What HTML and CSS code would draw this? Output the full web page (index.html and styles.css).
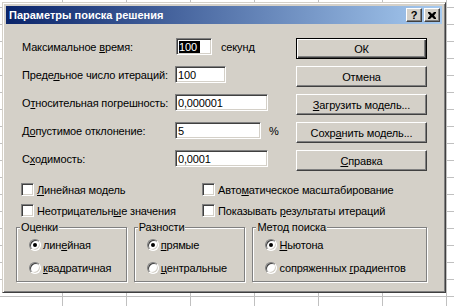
FILE: index.html
```html
<!DOCTYPE html>
<html lang="ru">
<head>
  <meta charset="UTF-8">
  <title>Параметры поиска решения</title>
  <link rel="stylesheet" href="styles.css">
</head>
<body>
  <div class="dialog">
    <div class="caption">
      <span class="caption-title">Параметры поиска решения</span>
      <span class="caption-btn help">?</span>
      <span class="caption-btn close">
        <svg width="8" height="7" viewBox="0 0 8 7"><path d="M0 0h2l2 2 2-2h2v1L6 3.5 8 6v1H6L4 5 2 7H0V6l2-2.5L0 1z" fill="#000"/></svg>
      </span>
    </div>

    <div class="client">
      <div class="top">
        <div class="fields">
          <div class="field">
            <span class="field-label">Максимальное <u>в</u>ремя:</span>
            <span class="edit edit-s"><span class="sel">100</span></span>
            <span class="unit">секунд</span>
          </div>
          <div class="field">
            <span class="field-label">Преде<u>л</u>ьное число итераций:</span>
            <span class="edit edit-m">100</span>
          </div>
          <div class="field">
            <span class="field-label">О<u>т</u>носительная погрешность:</span>
            <span class="edit edit-l">0,000001</span>
          </div>
          <div class="field">
            <span class="field-label">Д<u>о</u>пустимое отклонение:</span>
            <span class="edit edit-p">5</span>
            <span class="unit unit-pct">%</span>
          </div>
          <div class="field">
            <span class="field-label">С<u>х</u>одимость:</span>
            <span class="edit edit-l">0,0001</span>
          </div>
        </div>

        <div class="buttons">
          <span class="btn btn-default"><span>ОК</span></span>
          <span class="btn"><span>Отмена</span></span>
          <span class="btn"><span><u>З</u>агрузить модель...</span></span>
          <span class="btn"><span>Сохр<u>а</u>нить модель...</span></span>
          <span class="btn"><span><u>С</u>правка</span></span>
        </div>
      </div>

      <div class="checks">
        <span class="check"><span class="check-box"></span><span><u>Л</u>инейная модель</span></span>
        <span class="check"><span class="check-box"></span><span>Авто<u>м</u>атическое масштабирование</span></span>
        <span class="check"><span class="check-box"></span><span>Неотрицательн<u>ы</u>е значения</span></span>
        <span class="check"><span class="check-box"></span><span>Показывать <u>р</u>езультаты итераций</span></span>
      </div>

      <div class="groups">
        <fieldset class="group group-1">
          <legend>Оценки</legend>
          <span class="radio"><span class="radio-dot on"></span><span>лин<u>е</u>йная</span></span>
          <span class="radio"><span class="radio-dot"></span><span><u>к</u>вадратичная</span></span>
        </fieldset>
        <fieldset class="group group-2">
          <legend>Разности</legend>
          <span class="radio"><span class="radio-dot on"></span><span><u>п</u>рямые</span></span>
          <span class="radio"><span class="radio-dot"></span><span><u>ц</u>ентральные</span></span>
        </fieldset>
        <fieldset class="group group-3">
          <legend>Метод поиска</legend>
          <span class="radio"><span class="radio-dot on"></span><span><u>Н</u>ьютона</span></span>
          <span class="radio"><span class="radio-dot"></span><span>сопряженных <u>г</u>радиентов</span></span>
        </fieldset>
      </div>
    </div>
  </div>
</body>
</html>
```

FILE: styles.css
```css
html {
  height: 100%;
  background-color: #fff;
  background-image:
    linear-gradient(to right, #c0c0c0 1px, transparent 1px),
    linear-gradient(to bottom, #c0c0c0 1px, transparent 1px);
  background-size: 64px 100%, 100% 17px;
  background-position: 62px 0, 0 7px;
}
body {
  margin: 0;
  padding: 2px;
  font-family: 'Liberation Sans', Arial, sans-serif;
  font-size: 11px;
  letter-spacing: -0.15px;
  color: #000;
}
u {
  text-decoration: underline;
  text-underline-offset: 1px;
}
.dialog {
  box-sizing: border-box;
  width: 444px;
  height: 291px;
  padding: 3px;
  background: #d4d0c8;
  border: 1px solid;
  border-color: #d4d0c8 #404040 #404040 #d4d0c8;
  box-shadow: inset 1px 1px #fff, inset -1px -1px #808080;
}

/* title bar */
.caption {
  display: flex;
  align-items: center;
  height: 18px;
  padding: 0 2px 0 3px;
  background: linear-gradient(to right, #0a246a, #a6caf0);
}
.caption-title {
  flex: 1;
  color: #fff;
  font-weight: bold;
  font-size: 11px;
  letter-spacing: 0;
}
.caption-btn {
  box-sizing: border-box;
  display: flex;
  align-items: center;
  justify-content: center;
  width: 16px;
  height: 14px;
  background: #d4d0c8;
  border: 1px solid;
  border-color: #fff #404040 #404040 #fff;
  box-shadow: inset -1px -1px #808080;
}
.help {
  font-weight: bold;
  font-size: 11px;
  line-height: 1;
}
.close {
  margin-left: 2px;
}

.client {
  padding: 14px 15px 0 10px;
}
.top {
  display: flex;
}
.fields {
  flex: 1;
  padding-left: 6px;
}
.field {
  display: flex;
  align-items: center;
  height: 17px;
  margin-bottom: 11px;
}
.field:last-child {
  margin-bottom: 0;
}
.field-label {
  width: 153px;
}
.edit {
  box-sizing: border-box;
  display: flex;
  align-items: center;
  height: 17px;
  padding-left: 2px;
  background: #fff;
  border: 1px solid;
  border-color: #808080 #fff #fff #808080;
  box-shadow: inset 1px 1px #404040, inset -1px -1px #d4d0c8;
}
.edit-s { width: 36px; margin-left: 1px; }
.edit-m { width: 51px; }
.edit-l { width: 93px; }
.edit-p { width: 86px; }
.sel {
  background: #000;
  color: #fff;
  padding-right: 3px;
}
.unit {
  margin-left: 9px;
}
.unit-pct {
  margin-left: 8px;
}

.buttons {
  display: flex;
  flex-direction: column;
  gap: 7px;
  width: 131px;
}
.btn {
  box-sizing: border-box;
  display: flex;
  align-items: center;
  justify-content: center;
  height: 21px;
  background: #d4d0c8;
  border: 1px solid;
  border-color: #fff #404040 #404040 #fff;
  box-shadow: inset -1px -1px #808080;
}
.btn-default {
  border-color: #000;
  box-shadow: inset 1px 1px #fff, inset -1px -1px #404040, inset -2px -2px #808080;
}

.checks {
  display: grid;
  grid-template-columns: 181px auto;
  row-gap: 8px;
  margin-top: 12px;
  padding-left: 5px;
}
.check {
  display: flex;
  align-items: center;
  gap: 3px;
  height: 13px;
}
.check-box {
  box-sizing: border-box;
  width: 13px;
  height: 13px;
  background: #fff;
  border: 1px solid;
  border-color: #808080 #fff #fff #808080;
  box-shadow: inset 1px 1px #404040, inset -1px -1px #d4d0c8;
}

.groups {
  display: flex;
  gap: 7px;
  margin-top: 4px;
}
.group {
  box-sizing: border-box;
  min-inline-size: 0;
  margin: 0;
  padding: 3px 0 5px 12px;
  border: 1px solid #808080;
  box-shadow: inset 1px 1px #fff, 1px 1px #fff;
  display: flex;
  flex-direction: column;
  gap: 7px;
}
.group-1 { width: 111px; }
.group-2 { width: 112px; }
.group-3 { width: 175px; }
.group legend {
  margin-left: -9px;
  padding: 0 1px;
  line-height: 13px;
  background: #d4d0c8;
}
.radio {
  display: flex;
  align-items: center;
  gap: 2px;
  height: 16px;
}
.radio-dot {
  box-sizing: border-box;
  position: relative;
  width: 12px;
  height: 12px;
  border-radius: 50%;
  background: #fff;
  border: 1px solid;
  border-color: #808080 #fff #fff #808080;
  box-shadow: inset 1px 1px #404040, inset -1px -1px #d4d0c8;
}
.radio-dot.on::after {
  content: '';
  position: absolute;
  left: 3px;
  top: 3px;
  width: 4px;
  height: 4px;
  border-radius: 50%;
  background: #000;
}
```
